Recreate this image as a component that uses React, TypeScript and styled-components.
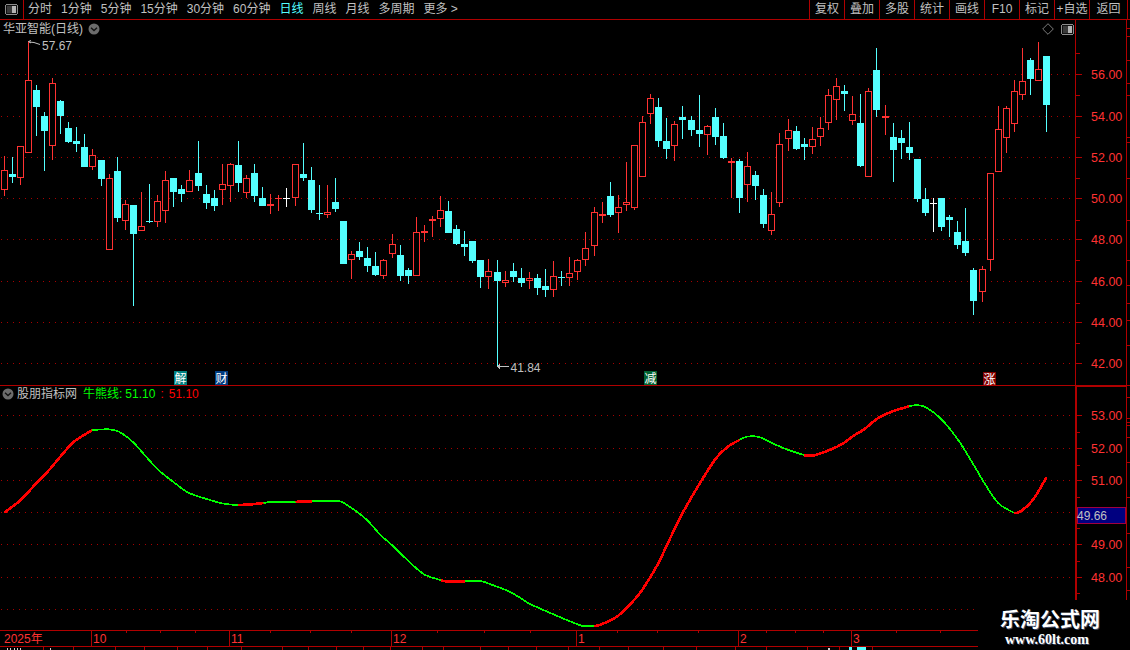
import React from "react";
import styled, { createGlobalStyle } from "styled-components";

const LINE = "#b00000";
const RED = "#ff3232";
const CYAN = "#54ffff";
const GREY = "#c0c0c0";
const UI_FONT = `"Liberation Sans", "Noto Sans CJK SC", sans-serif`;

const Global = createGlobalStyle`
  html, body { margin: 0; padding: 0; background: #000; overflow: hidden; }
  svg text { font-family: ${UI_FONT}; }
`;

const Page = styled.div`
  position: relative;
  width: 1130px;
  height: 650px;
  background: #000;
  overflow: hidden;
  display: flex;
  flex-direction: column;
  font-family: ${UI_FONT};
  font-size: 12px;
  color: ${GREY};
`;

const Toolbar = styled.header`
  flex: 0 0 20px;
  box-sizing: border-box;
  display: flex;
  align-items: stretch;
  border-bottom: 1px solid ${LINE};
  padding-right: 2px;
`;

const ToolIconBox = styled.div`
  flex: 0 0 24px;
  box-sizing: border-box;
  display: flex;
  align-items: center;
  justify-content: center;
  border-right: 1px solid ${LINE};
`;

const TabList = styled.nav`
  display: flex;
  align-items: center;
  gap: 9px;
  padding-left: 4px;
`;

const Tab = styled.span<{ $active?: boolean }>`
  white-space: nowrap;
  line-height: 19px;
  color: ${(p) => (p.$active ? CYAN : GREY)};
`;

const ActionBar = styled.div`
  margin-left: auto;
  display: flex;
`;

const ActionButton = styled.span<{ $last?: boolean }>`
  box-sizing: border-box;
  width: ${(p) => (p.$last ? 39 : 35)}px;
  border-left: 1px solid ${LINE};
  border-right: ${(p) => (p.$last ? `1px solid ${LINE}` : "none")};
  text-align: center;
  line-height: 19px;
  white-space: nowrap;
`;

const ChartPanel = styled.section<{ $height: number }>`
  position: relative;
  flex: 0 0 ${(p) => p.$height}px;
  box-sizing: border-box;
  display: flex;
  border-bottom: 1px solid ${LINE};
`;

const PlotArea = styled.div`
  flex: 0 0 1076px;
  box-sizing: border-box;
  border-right: 1px solid ${LINE};
`;

const AxisArea = styled.div`
  flex: 0 0 54px;
`;

const Drawing = styled.svg`
  display: block;
`;

const TitleBar = styled.div<{ $top: number }>`
  position: absolute;
  left: 3px;
  top: ${(p) => p.$top}px;
  display: flex;
  align-items: center;
  gap: 5px;
  line-height: 18px;
  white-space: nowrap;
`;

const LegendBar = styled(TitleBar)`
  left: 2px;
  gap: 3px;
`;

const LegendValue = styled.span<{ $color: string; $gap?: number }>`
  color: ${(p) => p.$color};
  margin-left: ${(p) => p.$gap ?? 0}px;
`;

const CornerTools = styled.div`
  position: absolute;
  top: 3px;
  left: 1042px;
  display: flex;
  align-items: center;
  gap: 7px;
`;

const TimeAxisRow = styled.div`
  flex: 0 0 16px;
  box-sizing: border-box;
  width: 978px;
  border-bottom: 1px solid ${LINE};
`;

const BottomStrip = styled.div`
  flex: 0 0 3px;
  width: 978px;
`;

const Watermark = styled.div`
  position: absolute;
  left: 978px;
  right: 0;
  top: 600px;
  bottom: 0;
  background: #000;
  display: flex;
  flex-direction: column;
  align-items: center;
  padding-top: 7px;
  box-sizing: border-box;
  padding-right: 8px;
`;

const WatermarkName = styled.div`
  font-family: "Noto Sans CJK SC", sans-serif;
  font-weight: 700;
  font-size: 20px;
  line-height: 24px;
  color: #fff;
  text-shadow: 1px 1px 0 #3c4660;
  white-space: nowrap;
`;

const WatermarkUrl = styled.div`
  font-family: "Liberation Serif", serif;
  font-weight: 700;
  font-size: 14px;
  line-height: 15px;
  margin-top: 1px;
  margin-right: 6px;
  color: #fff;
  text-shadow: 1px 1px 0 #3c4660;
  white-space: nowrap;
`;

type Raw = [string, number, number, number, number];

const GROUPS: { off: number; rows: Raw[] }[] = [
  {
    off: 40,
    rows: [
      ["r",348,391,451,470],["c",351,402,411,429],["r",319,319,415,437],["r",3,121,341,341],
      ["c",135,150,201,288],["c",216,228,273,393],["r",114,130,320,360],["c",180,183,228,282],
      ["c",246,264,306,309],["c",261,303,312,336],["c",282,321,381,381],["r",327,346,383,390],
      ["c",360,360,417,438],["r",402,415,632,632],["c",351,393,534,546],["r",480,493,545,570],
      ["c",495,495,582,798],["r",456,559,575,575],["c",432,543,546,549],["r",465,484,548,561],
      ["r",393,421,515,549],["c",414,414,456,501],["c",435,447,462,486],["r",390,421,458,458],
      ["c",303,399,438,453],["c",435,462,489,507],["c",450,474,498,513],["r",372,433,452,495],
      ["r",370,373,439,486],["c",303,375,429,456],["r",405,415,461,474],["c",372,399,468,486],
      ["c",441,474,498,498],["r",462,493,499,522],["f",465,475,479,513],["w",444,474,476,501],
    ],
  },
  {
    off: 130,
    rows: [
      ["r",103,103,206,228],["c",39,132,144,153],["c",111,150,240,249],["c",165,249,252,270],
      ["r",165,247,255,264],["c",144,216,237,246],["c",273,273,402,402],["r",363,373,392,447],
      ["c",336,363,381,390],["c",351,384,408,426],["c",366,408,435,438],["r",388,391,440,447],
      ["r",312,343,374,384],["c",346,375,438,453],["c",414,420,438,462],["r",261,307,440,440],
      ["r",285,304,311,336],["f",258,267,273,321],["r",198,241,269,291],["c",213,243,309,309],
      ["c",285,297,342,345],["c",303,342,351,378],["c",333,333,393,399],["c",390,390,441,474],
      ["r",387,424,443,477],["c",390,426,453,710],["r",423,451,460,471],["c",399,423,441,456],
      ["c",414,444,459,471],["r",426,445,455,477],["c",432,444,474,495],["c",417,468,480,501],
      ["r",393,439,482,501],["c",423,441,444,468],["r",381,430,446,468],["r",387,391,428,450],
    ],
  },
  {
    off: 70,
    rows: [
      ["r",486,535,572,588],["r",411,427,530,558],["r",396,433,440,459],["c",336,378,435,441],
      ["r",375,412,431,489],["r",276,397,407,423],["r",225,226,416,420],["r",138,157,323,323],
      ["r",72,85,134,162],["c",84,111,213,231],["c",144,213,237,267],["r",153,163,230,273],
      ["c",108,141,150,207],["c",138,150,180,198],["c",75,180,192,231],["r",165,169,197,255],
      ["c",114,141,201,225],["c",159,198,264,267],["r",264,274,281,384],["c",267,273,384,429],
      ["r",246,289,347,396],["c",303,315,348,390],["c",357,375,462,474],["r",366,433,485,495],
      ["r",189,223,401,411],["r",147,181,209,243],["c",168,183,237,240],["c",204,222,231,270],
      ["r",171,208,233,252],["r",141,175,203,228],["r",57,76,161,180],["r",24,49,92,150],
    ],
  },
  {
    off: 30,
    rows: [
      ["c",165,183,192,243],["r",198,253,275,285],["c",192,279,408,411],["r",174,184,443,443],
      ["c",54,120,240,261],["r",225,259,266,315],["c",279,321,360,456],["c",300,324,339,387],
      ["c",276,351,369,390],["c",387,387,507,516],["c",474,507,549,558],["w",504,519,522,608],
      ["c",504,504,591,603],["c",555,561,570,621],["c",573,606,645,657],["c",534,633,669,678],
      ["c",714,720,813,855],["r",708,718,788,816],["r",430,430,692,723],["r",228,298,428,428],
      ["r",228,235,325,369],["r",150,184,284,306],["r",54,154,197,210],["c",84,90,147,195],
      ["r",36,118,155,155],["c",78,78,225,306],
    ],
  },
];

const WIDE_STEPS = [12, 24, 36, 48, 61, 73, 85, 97, 109, 121];
const candleX = (i: number) => 4 + 8 * i + WIDE_STEPS.filter((j) => j <= i).length;

const candles = GROUPS.flatMap((g) =>
  g.rows.map((r) => ({
    kind: r[0],
    hi: Math.floor(g.off + r[1] / 3),
    top: Math.floor(g.off + r[2] / 3),
    bot: Math.floor(g.off + r[3] / 3),
    lo: Math.floor(g.off + r[4] / 3),
  }))
);

const Candle = ({ i, c }: { i: number; c: (typeof candles)[number] }) => {
  const x = candleX(i);
  const colour = c.kind === "c" ? CYAN : c.kind === "w" ? "#fff" : RED;
  const h = Math.max(c.bot - c.top, 1);
  return (
    <g>
      <rect x={x} y={c.hi} width={1} height={Math.max(c.lo - c.hi, 1)} fill={colour} />
      {c.kind === "r" ? (
        <rect x={x - 2.5} y={c.top + 0.5} width={6} height={Math.max(h - 1, 1)} fill="#000" stroke={colour} strokeWidth={1} />
      ) : c.kind === "w" ? (
        <rect x={x - 3} y={c.top} width={7} height={1} fill={colour} />
      ) : (
        <rect x={x - 3} y={c.top} width={7} height={h} fill={colour} />
      )}
    </g>
  );
};

const GridLines = ({ ys, x2 }: { ys: number[]; x2: number }) => (
  <g>
    {ys.map((y) => (
      <line key={y} x1={1} x2={x2} y1={y + 0.5} y2={y + 0.5} stroke="#a80000" strokeWidth={1} strokeDasharray="1 5" shapeRendering="crispEdges" />
    ))}
  </g>
);

const Tag = ({ x, y, bg, text }: { x: number; y: number; bg: string; text: string }) => (
  <g>
    <rect x={x} y={y} width={13} height={14} fill={bg} />
    <text x={x + 0.5} y={y + 11.5} fontSize={12} fill="#fff">{text}</text>
  </g>
);

const Chevron = () => (
  <svg width="12" height="12" viewBox="0 0 12 12">
    <circle cx="6" cy="6" r="5.5" fill="#6c6c6c" />
    <path d="M3 4.8 L6 7.6 L9 4.8" fill="none" stroke="#111" strokeWidth="1.3" />
  </svg>
);

const PaneToggle = () => (
  <svg width="13" height="11" viewBox="0 0 13 11" shapeRendering="crispEdges">
    <rect x="0.5" y="0.5" width="12" height="10" rx="2" fill="#111" stroke="#8c8c8c" />
    <rect x="7" y="2" width="4" height="7" fill="#b4b4b4" />
    <rect x="2" y="2" width="5" height="7" fill="#3a3a3a" />
  </svg>
);

const Diamond = () => (
  <svg width="12" height="12" viewBox="0 0 12 12">
    <path d="M6 0.7 L11.3 6 L6 11.3 L0.7 6 Z" fill="none" stroke="#7c7c7c" strokeWidth="1" />
  </svg>
);

const MAIN_PRICES: [number, string][] = [
  [74, "56.00"], [116, "54.00"], [157, "52.00"], [198, "50.00"],
  [239, "48.00"], [281, "46.00"], [322, "44.00"], [363, "42.00"],
];
const MAIN_MINOR = [53, 95, 137, 178, 220, 260, 303, 343];
const MAIN_OUTER = [28, 36, 60, 83, 95, 137, 142, 178, 220, 260, 285, 303, 320, 345];

const SUB_PRICES: [number, string][] = [
  [415, "53.00"], [448, "52.00"], [480, "51.00"], [544, "49.00"], [577, "48.00"],
];
const SUB_MINOR = [432, 465, 497, 528, 561, 593];
const SUB_OUTER = [397, 418, 422, 425, 437, 462, 497, 533, 567, 590];

const AxisLabel = ({ y, text }: { y: number; text: string }) => (
  <text x={1091} y={y + 5} fontSize={12.5} fill={RED}>{text}</text>
);

const AxisTicks = ({ major, minor, outer }: { major: number[]; minor: number[]; outer: number[] }) => (
  <g fill={LINE} shapeRendering="crispEdges">
    {major.map((y) => <rect key={y} x={1076} y={y} width={6} height={1} />)}
    {minor.map((y) => <rect key={y} x={1076} y={y} width={4} height={1} />)}
    {outer.map((y) => <rect key={y} x={1127} y={y} width={3} height={1} />)}
    <rect x={1126} y={0} width={1} height={700} />
  </g>
);

type Pt = [number, number];
const X_SCALE = 1568 / 540;
const L = (pts: number[]): Pt[] => {
  const out: Pt[] = [];
  for (let i = 0; i < pts.length; i += 2) out.push([pts[i] / X_SCALE, 395 + pts[i + 1] / 3]);
  return out;
};
const R = (pts: number[]): Pt[] => L(pts).map(([x, y]) => [x + 530, y] as Pt);

const smooth = (p: Pt[]) => {
  let d = `M${p[0][0].toFixed(1)} ${p[0][1].toFixed(1)}`;
  for (let i = 0; i < p.length - 1; i++) {
    const a = p[Math.max(i - 1, 0)], b = p[i], c = p[i + 1], e = p[Math.min(i + 2, p.length - 1)];
    const c1x = b[0] + (c[0] - a[0]) / 6, c1y = b[1] + (c[1] - a[1]) / 6;
    const c2x = c[0] - (e[0] - b[0]) / 6, c2y = c[1] - (e[1] - b[1]) / 6;
    d += ` C${c1x.toFixed(1)} ${c1y.toFixed(1)} ${c2x.toFixed(1)} ${c2y.toFixed(1)} ${c[0].toFixed(1)} ${c[1].toFixed(1)}`;
  }
  return d;
};

const SEGMENTS: { up: boolean; pts: Pt[] }[] = [
  { up: true, pts: L([12,353,60,315,105,265,140,228,175,185,215,140,268,105]) },
  { up: false, pts: L([268,105,315,103,345,110,385,140,420,180,460,225,500,258,545,292,600,312,650,326,690,330]) },
  { up: true, pts: L([690,330,730,328,765,324]) },
  { up: false, pts: L([765,324,790,321,858,321]) },
  { up: true, pts: L([858,322,870,319,905,319]) },
  { up: false, pts: L([905,318,975,318,1000,325,1060,370,1105,420,1140,452,1195,507,1235,540,1280,555]) },
  { up: true, pts: L([1280,556,1295,559,1350,559]) },
  { up: false, pts: [...L([1350,558,1395,558,1430,570,1480,590,1520,615]), ...R([0,627,50,650,100,672,150,692,187,693])] },
  { up: true, pts: R([187,694,215,685,255,663,310,606,335,570,370,510,400,445,440,360,490,270,540,190,575,155,608,135]) },
  { up: false, pts: R([608,135,630,125,665,126,700,143,745,163,795,180]) },
  { up: true, pts: R([795,181,825,181,870,165,905,148,940,122,970,103,1010,70,1050,50,1100,34]) },
  { up: false, pts: R([1100,33,1140,33,1190,68,1240,130,1280,195,1320,265,1360,325,1405,353]) },
  { up: true, pts: R([1405,354,1425,349,1460,315,1500,247]) },
];

const MONTH_LINES: [number, string][] = [
  [91, "10"], [229, "11"], [391, "12"], [576, "1"], [738, "2"], [851, "3"],
];
const TOP_TICKS = [126, 160, 195, 270, 310, 351, 437, 484, 530, 617, 657, 698, 766, 795, 823, 896, 940];
const LOW_TICKS = [43, 73, 115, 144, 177, 207, 241, 282, 308, 336, 363, 390, 422, 443, 480, 508, 536, 568, 599, 628, 663, 696, 735, 766, 807, 839, 872];

const TABS: [string, boolean?][] = [
  ["分时"], ["1分钟"], ["5分钟"], ["15分钟"], ["30分钟"], ["60分钟"],
  ["日线", true], ["周线"], ["月线"], ["多周期"], ["更多 >"],
];
const ACTIONS = ["复权", "叠加", "多股", "统计", "画线", "F10", "标记", "+自选", "返回"];

export default function App() {
  return (
    <Page>
      <Global />
      <Toolbar>
        <ToolIconBox><PaneToggle /></ToolIconBox>
        <TabList>
          {TABS.map(([t, on]) => <Tab key={t} $active={on}>{t}</Tab>)}
        </TabList>
        <ActionBar>
          {ACTIONS.map((a, i) => <ActionButton key={a} $last={i === ACTIONS.length - 1}>{a}</ActionButton>)}
        </ActionBar>
      </Toolbar>

      <ChartPanel $height={366}>
        <PlotArea>
          <Drawing width={1075} height={365} viewBox="0 20 1075 365">
            <GridLines ys={MAIN_PRICES.map(([y]) => y)} x2={1075} />
            <g shapeRendering="crispEdges">
              {candles.map((c, i) => <Candle key={i} i={i} c={c} />)}
            </g>
            <path d="M28.5 41.5 L31 43 M28.5 41.5 L31 40.5 M29 42 L34 42.5 L40 44.5" fill="none" stroke={GREY} strokeWidth="1" />
            <text x={42} y={50} fontSize={12} fill={GREY}>57.67</text>
            <path d="M497.5 366.5 H508.5 M497.5 366.5 L500 364.5 M497.5 366.5 L500 368.5" fill="none" stroke={GREY} strokeWidth="1" shapeRendering="crispEdges" />
            <text x={510.5} y={372} fontSize={12} fill={GREY}>41.84</text>
            <Tag x={174} y={371} bg="#008080" text="解" />
            <Tag x={215} y={371} bg="#003c80" text="财" />
            <Tag x={644} y={371} bg="#006030" text="减" />
            <Tag x={983} y={372} bg="#800000" text="涨" />
          </Drawing>
        </PlotArea>
        <AxisArea>
          <Drawing width={54} height={365} viewBox="1076 20 54 365">
            <AxisTicks major={MAIN_PRICES.map(([y]) => y)} minor={MAIN_MINOR} outer={MAIN_OUTER} />
            {MAIN_PRICES.map(([y, t]) => <AxisLabel key={t} y={y} text={t} />)}
          </Drawing>
        </AxisArea>
        <TitleBar $top={0}>
          <span>华亚智能(日线)</span>
          <Chevron />
        </TitleBar>
        <CornerTools>
          <Diamond />
          <PaneToggle />
        </CornerTools>
      </ChartPanel>

      <ChartPanel $height={245}>
        <PlotArea>
          <Drawing width={1075} height={244} viewBox="0 386 1075 244">
            <GridLines ys={[415, 448, 480, 512, 544, 577, 609]} x2={1075} />
            {SEGMENTS.map((s, i) => (
              <path key={i} d={smooth(s.pts)} fill="none" stroke={s.up ? "#ff0000" : "#00ff00"} strokeWidth={s.up ? 2.6 : 1.7} shapeRendering="crispEdges" />
            ))}
          </Drawing>
        </PlotArea>
        <AxisArea>
          <Drawing width={54} height={244} viewBox="1076 386 54 244">
            <AxisTicks major={SUB_PRICES.map(([y]) => y)} minor={SUB_MINOR} outer={SUB_OUTER} />
            <rect x={1076} y={386} width={51} height={1} fill={LINE} />
            <rect x={1076} y={386} width={1} height={244} fill={LINE} />
            {SUB_PRICES.map(([y, t]) => <AxisLabel key={t} y={y} text={t} />)}
            <rect x={1077.5} y={507.5} width={48} height={16} fill="#000080" stroke="#a00040" strokeWidth={1} shapeRendering="crispEdges" />
            <text x={1077} y={520} fontSize={12} fill={GREY}>49.66</text>
          </Drawing>
        </AxisArea>
        <LegendBar $top={-1}>
          <Chevron />
          <span>股朋指标网</span>
          <LegendValue $color="#00ff00" $gap={3}>牛熊线:</LegendValue>
          <LegendValue $color="#00ff00">51.10</LegendValue>
          <LegendValue $color="#ff0000" $gap={2}>:</LegendValue>
          <LegendValue $color="#ff0000" $gap={2}>51.10</LegendValue>
        </LegendBar>
      </ChartPanel>

      <TimeAxisRow>
        <Drawing width={978} height={15} viewBox="0 631 978 15">
          <g fill={LINE} shapeRendering="crispEdges">
            {TOP_TICKS.map((x) => <rect key={x} x={x} y={631} width={1} height={2} />)}
            {MONTH_LINES.map(([x]) => <rect key={x} x={x} y={631} width={1} height={15} />)}
          </g>
          <text x={4} y={643} fontSize={12} fill={RED}>2025年</text>
          {MONTH_LINES.map(([x, t]) => <text key={t} x={x + 2} y={643} fontSize={12} fill={RED}>{t}</text>)}
        </Drawing>
      </TimeAxisRow>

      <BottomStrip>
        <Drawing width={978} height={3} viewBox="0 647 978 3" shapeRendering="crispEdges">
          {LOW_TICKS.map((x) => <rect key={x} x={x} y={647} width={1} height={3} fill={LINE} />)}
          <g fill="#d0d0d0">
            {[7, 10, 14, 17, 20, 50].map((x) => <rect key={x} x={x} y={648} width={1} height={2} />)}
            <rect x={828} y={648} width={2} height={2} />
          </g>
          <g fill={CYAN}>
            <rect x={849} y={647} width={3} height={3} />
            <rect x={857} y={647} width={9} height={3} />
          </g>
        </Drawing>
      </BottomStrip>

      <Watermark>
        <WatermarkName>乐淘公式网</WatermarkName>
        <WatermarkUrl>www.60lt.com</WatermarkUrl>
      </Watermark>
    </Page>
  );
}
